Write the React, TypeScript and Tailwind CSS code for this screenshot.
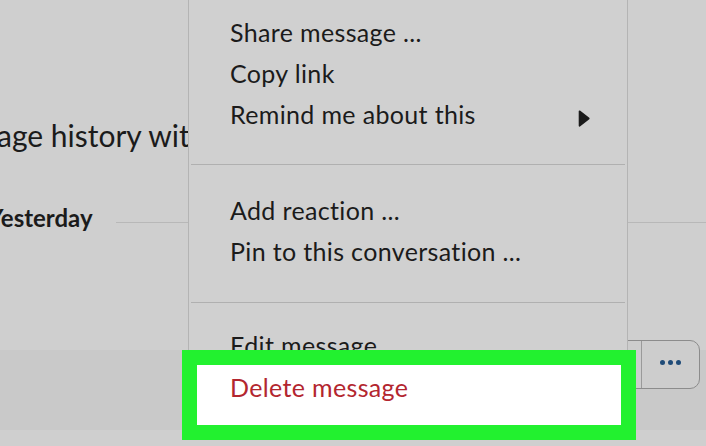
import React from 'react'

type MenuItem = {
  label: string
  submenu?: boolean
}

const sections: MenuItem[][] = [
  [
    { label: 'Share message ...' },
    { label: 'Copy link' },
    { label: 'Remind me about this', submenu: true }
  ],
  [{ label: 'Add reaction ...' }, { label: 'Pin to this conversation ...' }]
]

const SubmenuArrow = () => (
  <svg width="12" height="17" viewBox="0 0 12 17" className="mt-[16px]">
    <path d="M1.5 1.2 L10.8 8.5 L1.5 15.8 Z" fill="#1b1b1b" strokeLinejoin="round" stroke="#1b1b1b" strokeWidth="1.6" />
  </svg>
)

const MenuRow = ({ item }: { item: MenuItem }) => (
  <div className="flex h-[41px] items-start justify-between pl-[41px] pr-[37px] text-[25px] leading-[41px] tracking-[0.35px] text-[#1b1b1b]">
    <span>{item.label}</span>
    {item.submenu ? <SubmenuArrow /> : null}
  </div>
)

const MessageMenu = () => (
  <div className="absolute left-[188px] top-0 z-10 w-[440px] border-x border-[#b4b4b4] bg-[#d0d0d0]">
    <div className="pb-[29px] pt-[12px]">
      {sections[0].map(item => (
        <MenuRow key={item.label} item={item} />
      ))}
    </div>
    <div className="mx-[2px] h-px bg-[#b0b0b0]" />
    <div className="pb-[30px] pt-[25px]">
      {sections[1].map(item => (
        <MenuRow key={item.label} item={item} />
      ))}
    </div>
    <div className="mx-[2px] h-px bg-[#b0b0b0]" />
    <div className="pt-[22px]">
      <MenuRow item={{ label: 'Edit message' }} />
      {/* highlighted item */}
      <div className="-mt-px ml-[8px] mr-[6px] h-[60px] bg-white pl-[33px] pt-[2px] text-[25px] leading-[41px] tracking-[0.35px] text-[#b3262f] outline-[15px] outline-[#22f12f] outline-solid">
        Delete message
      </div>
    </div>
  </div>
)

const HoverActions = () => (
  <div className="absolute left-[560px] top-[340px] z-0 flex h-[49px] w-[140px] rounded-[10px] border border-[#8c8c8c] bg-[#cdcdcd]">
    <div className="w-[81px] border-r border-[#9a9a9a]" />
    <div className="flex flex-1 items-center justify-center gap-[3px] pb-[4px]">
      <span className="h-[5px] w-[5px] rounded-full bg-[#1f4b78]" />
      <span className="h-[5px] w-[5px] rounded-full bg-[#1f4b78]" />
      <span className="h-[5px] w-[5px] rounded-full bg-[#1f4b78]" />
    </div>
  </div>
)

export default function App() {
  return (
    <div className="relative h-[446px] w-[706px] overflow-hidden bg-[#cfcfcf] font-['Lato','Liberation_Sans',sans-serif]">
      <div className="flex flex-col">
        <p className="-ml-[3px] whitespace-nowrap pt-[117px] text-[30px] leading-[36px] text-[#1b1b1b]">
          age history with Slack.
        </p>
        <div className="mt-[50px] flex h-[29px] items-end">
          <span className="-ml-[12px] whitespace-nowrap text-[24px] font-bold leading-[29px] text-[#1b1b1b]">
            Yesterday
          </span>
          <div className="mb-[9px] ml-[23px] h-px flex-1 bg-[#b8b8b8]" />
        </div>
        <div className="mt-[118px] h-[80px] bg-[#c9c9c9]" />
      </div>
      <HoverActions />
      <MessageMenu />
    </div>
  )
}
